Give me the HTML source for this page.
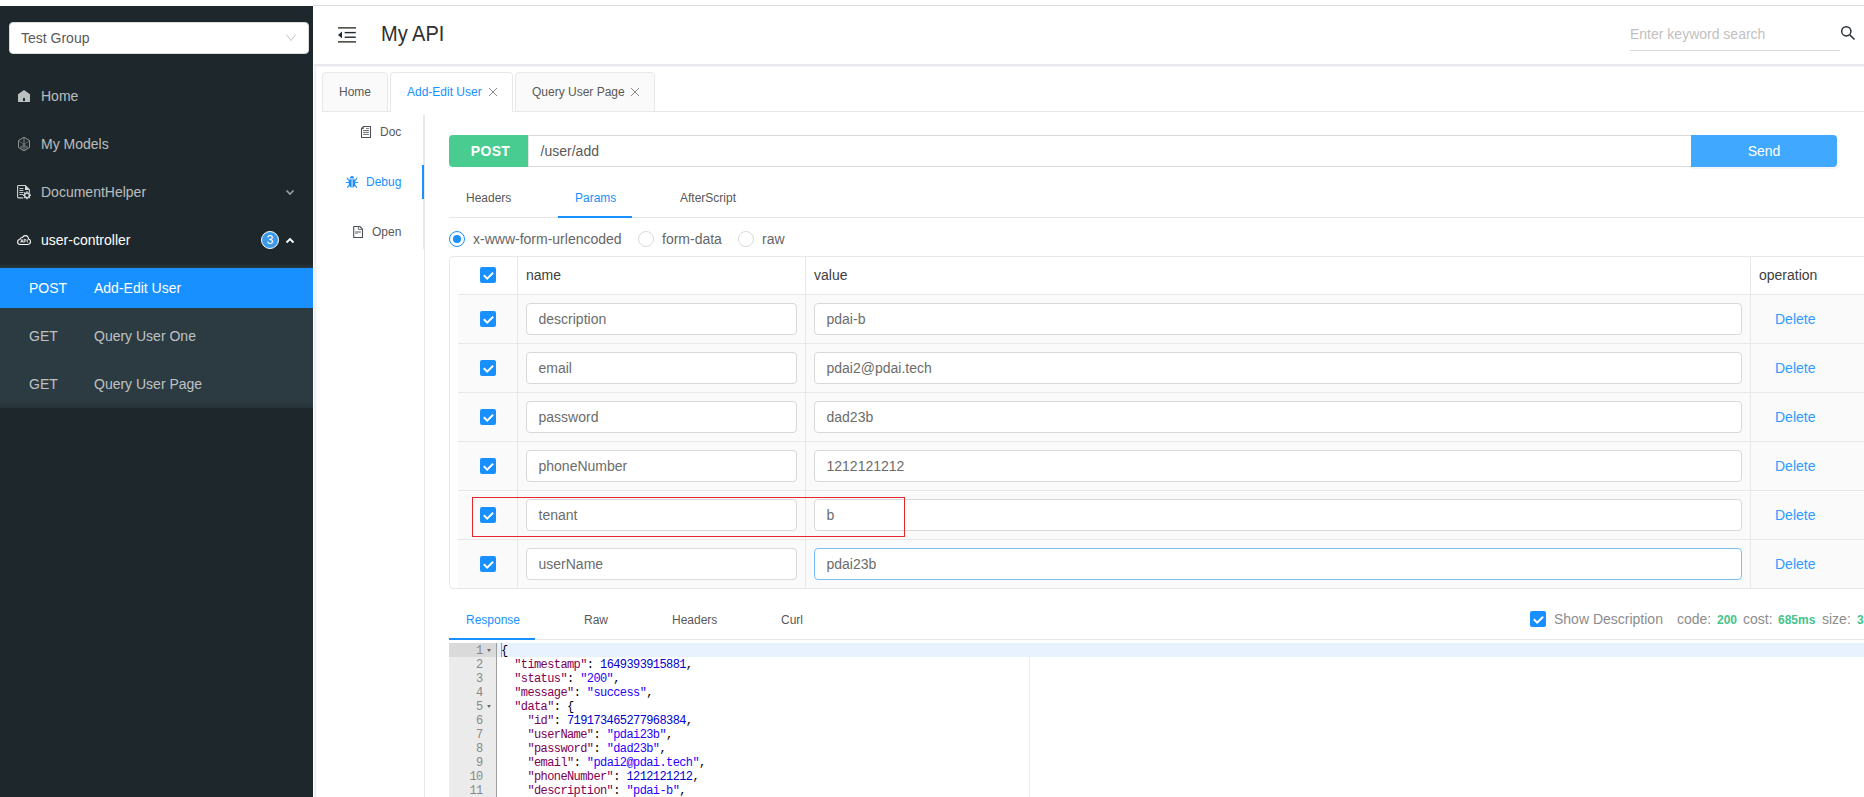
<!DOCTYPE html>
<html>
<head>
<meta charset="utf-8">
<title>My API</title>
<style>
*{box-sizing:border-box;margin:0;padding:0}
html,body{width:1864px;height:797px;overflow:hidden;background:#fff}
body{font-family:"Liberation Sans",sans-serif;font-size:14px;color:#595959;position:relative}
.abs{position:absolute}
/* top strip */
#topline{left:313px;top:5px;width:1551px;height:1px;background:#dcdce4}
/* sidebar */
#side{left:0;top:6px;width:313px;height:791px;background:#1e282c}
#grp{left:9px;top:16px;width:300px;height:32px;background:#fff;border-radius:4px;border:1px solid #d9d9d9}
#grp span{position:absolute;left:11px;top:0;line-height:30px;font-size:14px;color:#595959}
.mi{position:absolute;left:0;width:313px;height:40px;line-height:40px;color:rgba(255,255,255,.7);font-size:14px}
.mi .t{position:absolute;left:41px;top:0}
.mi svg{position:absolute}
#sub{left:0;top:258px;width:313px;height:144px;background:linear-gradient(#1f2a2e,#2c3b41 5px,#2c3b41 138px,#263338)}
.si{position:absolute;left:0;width:313px;height:40px;line-height:40px;color:rgba(255,255,255,.7);font-size:14px}
.si .m{position:absolute;left:29px}
.si .n{position:absolute;left:94px}
.si.sel{background:#1890ff;color:#fff}
/* header */
#hdr{left:313px;top:6px;width:1551px;height:58px;background:#fff}
#title{left:68px;top:0;line-height:56px;font-size:20px;color:#303030;transform:scaleY(1.07);transform-origin:0 35px}
#band{left:314px;top:64px;width:1550px;height:3px;background:linear-gradient(#e8e9ed 0,#e8e9ed 2px,#f4f5f7 2px)}
#bandl{left:314px;top:66px;width:3px;height:731px;background:linear-gradient(90deg,#eff0f4 0,#eff0f4 2px,#f7f8fa 2px)}
/* tabs */
.tab{position:absolute;top:72px;height:40px;border:1px solid #e8e8e8;border-radius:4px 4px 0 0;background:#fafafa;font-size:12px;line-height:38px;color:#595959}
.tab.act{background:#fff;border-bottom-color:#fff;color:#1890ff}
.tab span{position:absolute;top:0;white-space:nowrap}
#tabline{left:322px;top:111px;width:1542px;height:1px;background:#e8e8e8}
.lt{position:absolute;font-size:12px;color:#595959;white-space:nowrap;line-height:14px}
/* url bar */
#post{left:449px;top:135px;width:79px;height:32px;background:#49cc90;border-radius:4px 0 0 4px;color:#fff;font-weight:bold;font-size:14px;line-height:32px;text-align:center;letter-spacing:.3px;padding-left:4px}
#url{left:528px;top:135px;width:1163px;height:32px;border:1px solid #d9d9d9;border-left:1px solid #e4e4e4;border-right:none;line-height:30px;font-size:14px;color:#595959;padding-left:11.6px;background:#fff}
#send{left:1691px;top:135px;width:146px;height:32px;background:#40a9ff;border-radius:0 4px 4px 0;color:#fff;font-size:14px;line-height:32px;text-align:center;box-shadow:0 2px 0 rgba(0,0,0,.035)}
.it{position:absolute;font-size:12px;color:#595959;white-space:nowrap;line-height:14px}
.blue{color:#1890ff}
.hl{position:absolute;height:1px;background:#e8e8e8}
.radio{position:absolute;width:16px;height:16px;border:1px solid #d9d9d9;border-radius:50%;background:#fff}
.radio.on{border-color:#1890ff}
.radio.on:after{content:"";position:absolute;left:3px;top:3px;width:8px;height:8px;border-radius:50%;background:#1890ff}
.rt{position:absolute;font-size:14px;color:#666;white-space:nowrap;line-height:16px}
/* table */
#tbl{left:449px;top:256px;width:1420px;height:333px;border:1px solid #e8e8e8;border-radius:4px 0 0 4px;background:#fff}
.row{position:absolute;left:458px;width:1406px;height:49px;background:#fafafa;border-top:1px solid #e8e8e8}
.vl{position:absolute;width:1px;background:#e8e8e8;top:257px;height:331px}
.cb{position:absolute;width:16px;height:16px;background:#1890ff;border-radius:2px}
.cb:after{content:"";position:absolute;left:0;top:0;width:16px;height:16px;background:#fff;clip-path:polygon(7.2px 13.1px,13.8px 6.5px,12.4px 5.1px,7.2px 10.3px,4.5px 7.6px,3.1px 9px)}
.inp{position:absolute;height:32px;border:1px solid #d9d9d9;border-radius:4px;background:#fff;font-size:14px;color:#6c6c6c;line-height:30px;padding-left:11.5px;white-space:nowrap}
.inp.n{left:526px;width:271px}
.inp.v{left:814px;width:928px}
.th{position:absolute;font-size:14px;color:#404040;line-height:16px}
.del{position:absolute;left:1775px;font-size:14px;color:#2f9bff;line-height:16px}
#red{left:472px;top:497px;width:433px;height:40px;border:1px solid #e5262c}
/* response */
.g{color:#8c8c8c}
.gr{color:#43c58c;font-weight:bold;font-size:12px;margin-top:1px}
/* code */
#gut{left:449px;top:643px;width:48px;height:154px;background:#ebebeb;border-right:1px solid #9f9f9f}
#gact{left:449px;top:643px;width:47px;height:14px;background:#dadada}
#lact{left:497px;top:643px;width:1367px;height:14px;background:#e8f2fe}
#pm{left:1029px;top:657px;width:1px;height:140px;background:#ebebeb}
#cur{left:501px;top:643px;width:1px;height:14px;background:#999}
.ln{position:absolute;left:449px;width:33.6px;text-align:right;font-family:"Liberation Mono",monospace;font-size:12px;letter-spacing:-.6px;line-height:14px;color:#888;margin-top:1px}
.cl{position:absolute;left:501px;font-family:"Liberation Mono",monospace;font-size:12px;letter-spacing:-.6px;line-height:14px;color:#000;white-space:pre;margin-top:1px}
.k{color:#7f0055}.s{color:#2a00ff}.nu{color:#0000cd}
.fold{position:absolute;left:487px;width:0;height:0;border:2.5px solid transparent;border-top:3px solid #666;border-bottom:0}
</style>
</head>
<body>
<div class="abs" id="topline"></div>
<div class="abs" id="side">
 <div class="abs" id="grp"><span>Test Group</span>
  <svg class="abs" style="left:275px;top:11px" width="12" height="10" viewBox="0 0 12 10"><path d="M1.3 .5 L6 6.5 L10.7 .5" fill="none" stroke="#c2c0c8" stroke-width="1"/></svg>
 </div>
 <div class="mi" style="top:70px"><svg style="left:17px;top:13px" width="14" height="14" viewBox="0 0 14 14"><path d="M7 1 L13 5.3 V12.6 Q13 13 12.6 13 H1.4 Q1 13 1 12.6 V5.3 Z" fill="#babfc0"/><path d="M6 12 V9.6 Q6 8.8 7 8.8 Q8 8.8 8 9.6 V12 Z" fill="#1e282c"/></svg><span class="t">Home</span></div>
 <div class="mi" style="top:118px"><svg style="left:17px;top:12px" width="14" height="16" viewBox="0 0 14 16"><g fill="none" stroke="#8f9392" stroke-linejoin="round"><path d="M7 1.2 L12.5 4.5 V11.5 L7 14.8 L1.5 11.5 V4.5 Z" stroke-width="1"/><path d="M7 1.2 V13.5" stroke-width=".9"/><path d="M1.5 4.5 L10.6 11 M12.5 4.5 L3.4 11 M3.4 11 H10.6 M3.4 11 L7 14.8 L10.6 11" stroke-width=".7" opacity=".8"/></g></svg><span class="t">My Models</span></div>
 <div class="mi" style="top:166px"><svg style="left:16px;top:12px" width="16" height="16" viewBox="0 0 16 16"><path d="M7.2 13.9 H2.4 Q1.6 13.9 1.6 13.1 V2.3 Q1.6 1.5 2.4 1.5 H9.3 L13.4 5.8 V8.2" fill="none" stroke="#d0d3d3" stroke-width="1.1"/><path d="M9 1.5 L13.4 6 H9 Z" fill="#d8dada"/><path d="M3.4 4.5 H7.4 M3.4 6.5 H7.4 M3.4 8.5 H7.4 M3.4 10.5 H7" stroke="#c4c7c7" stroke-width="1" fill="none"/><g transform="translate(11 11.3)"><circle r="2.4" fill="none" stroke="#cfd2d2" stroke-width="1.5"/><g stroke="#cfd2d2" stroke-width="1.4"><path d="M0 -4 V-2.6 M0 4 V2.6 M-4 0 H-2.6 M4 0 H2.6 M-2.8 -2.8 L-1.9 -1.9 M2.8 2.8 L1.9 1.9 M-2.8 2.8 L-1.9 1.9 M2.8 -2.8 L1.9 -1.9"/></g></g></svg><span class="t">DocumentHelper</span>
  <svg style="left:285px;top:17px" width="10" height="7" viewBox="0 0 10 7"><path d="M1.5 1.5 L5 5 L8.5 1.5" fill="none" stroke="#9aa0a2" stroke-width="1.6"/></svg></div>
 <div class="mi" style="top:214px;color:#fff"><svg style="left:16px;top:14px" width="16" height="12" viewBox="0 0 16 12"><path d="M4.2 10.4 C2.4 10.4 1.6 9.2 1.6 8 C1.6 6.6 2.6 5.6 3.9 5.5 C4.2 3.9 5.4 3.4 6.4 3.6 C7 2.4 8 1.6 9.3 1.6 C11.2 1.6 12.4 3 12.5 4.9 C13.8 5.2 14.5 6.3 14.5 7.6 C14.5 9.2 13.4 10.4 11.8 10.4 Z" fill="none" stroke="#fff" stroke-width="1.05"/><path d="M4.6 8.7 L5.9 5.3 L7.2 8.7 M5.1 7.6 H6.7 M8.1 8.7 V5.4 H9.2 Q10.1 5.4 10.1 6.3 Q10.1 7.2 9.2 7.2 H8.1 M11.3 5.3 V8.7" fill="none" stroke="#fff" stroke-width=".8"/></svg><span class="t">user-controller</span>
  <div class="abs" style="left:261px;top:11px;width:18px;height:18px;border-radius:9px;background:#3c9ae8;border:1px solid #fff;color:#fff;font-size:12px;line-height:16px;text-align:center">3</div>
  <svg style="left:285px;top:17px" width="10" height="7" viewBox="0 0 10 7"><path d="M1.5 5.5 L5 2 L8.5 5.5" fill="none" stroke="#fff" stroke-width="1.8"/></svg></div>
 <div class="abs" id="sub">
  <div class="si sel" style="top:4px"><span class="m">POST</span><span class="n">Add-Edit User</span></div>
  <div class="si" style="top:52px"><span class="m">GET</span><span class="n">Query User One</span></div>
  <div class="si" style="top:100px"><span class="m">GET</span><span class="n">Query User Page</span></div>
 </div>
</div>
<div class="abs" id="hdr">
 <svg class="abs" style="left:25px;top:21px" width="18" height="16" viewBox="0 0 18 16"><g fill="#595651"><rect x="0" y="0" width="18" height="1.7"/><rect x="0" y="14" width="18" height="1.7"/></g><g fill="#1e2a33"><rect x="6.7" y="4.9" width="11.1" height="1.4"/><rect x="6.7" y="9.5" width="11.1" height="1.4"/><path d="M0 7.9 L4 4.6 V11.2 Z"/></g></svg>
 <div class="abs" id="title">My API</div>
 <div class="abs" style="left:1317px;top:18px;font-size:14px;color:#bfbfbf;line-height:20px">Enter keyword search</div>
 <div class="abs" style="left:1317px;top:44px;width:210px;height:1px;background:#d9d9d9"></div>
 <svg class="abs" style="left:1527px;top:19px" width="16" height="16" viewBox="0 0 16 16"><circle cx="6.3" cy="6.3" r="4.6" fill="none" stroke="#283238" stroke-width="1.5"/><path d="M9.7 9.7 L14.5 14.5" stroke="#283238" stroke-width="1.6"/></svg>
</div>
<div class="abs" id="band"></div>
<div class="abs" id="bandl"></div>
<div class="tab" style="left:322px;width:66px"><span style="left:16px">Home</span></div>
<div class="abs" id="tabline"></div>
<div class="tab act" style="left:390px;width:123px"><span style="left:16px">Add-Edit User</span>
 <svg class="abs" style="left:97px;top:14px" width="10" height="10" viewBox="0 0 10 10"><path d="M1 1 L9 9 M9 1 L1 9" stroke="#8c8c8c" stroke-width="1"/></svg></div>
<div class="tab" style="left:515px;width:140px"><span style="left:16px">Query User Page</span>
 <svg class="abs" style="left:114px;top:14px" width="10" height="10" viewBox="0 0 10 10"><path d="M1 1 L9 9 M9 1 L1 9" stroke="#8c8c8c" stroke-width="1"/></svg></div>
<!-- left vertical tabs -->
<div class="abs" style="left:423px;top:115px;width:1px;height:134px;background:#e8e8e8"></div>
<div class="abs" style="left:424px;top:115px;width:1px;height:682px;background:#e8e8e8"></div>
<div class="abs" style="left:422px;top:165px;width:2px;height:34px;background:#1890ff"></div>
<svg class="abs" style="left:360px;top:125px" width="12" height="14" viewBox="0 0 12 14"><path d="M3.4 1.5 H10.5 V12.5 H1.5 V3.6 Z" fill="none" stroke="#4d5157" stroke-width="1.1" stroke-linejoin="round"/><path d="M3.7 1.2 V3.9 H1.2 Z" fill="#4d5157"/><path d="M6.1 3.6 H8.9 M3.1 5.5 H8.9 M3.1 7.4 H8.9 M3.1 9.4 H8.9" stroke="#5c5c5c" stroke-width=".9" fill="none"/></svg>
<div class="lt" style="left:380px;top:125px">Doc</div>
<svg class="abs" style="left:345px;top:175px" width="14" height="14" viewBox="0 0 14 14"><path d="M4.2 4.6 Q4.4 3.1 5.2 3.1 H8.8 Q9.6 3.1 9.8 4.6 Z" fill="#a6cdf7"/><path d="M5 3 A2 2 0 0 1 9 3 Z" fill="#1890ff"/><path d="M3.8 5.6 Q3.8 4.5 5 4.5 H9 Q10.3 4.5 10.3 5.6 V9 Q10.3 12.2 7 12.6 Q3.8 12.2 3.8 9 Z" fill="#1890ff"/><rect x="6.3" y="4.5" width="1.6" height="8.3" fill="#a6cdf7"/><path d="M3.9 5.3 L2.2 3.2 M10.2 5.3 L11.9 3.2 M3.7 7.5 H1.3 M10.4 7.5 H12.8 M4.1 10.4 L2.4 12.3 M10 10.4 L11.7 12.3" stroke="#2b93ff" stroke-width="1.1" stroke-linecap="round" fill="none"/></svg>
<div class="lt blue" style="left:366px;top:175px">Debug</div>
<svg class="abs" style="left:352px;top:225px" width="12" height="14" viewBox="0 0 12 14"><path d="M1.7 1.5 H7.8 L10.5 4.2 V12.5 H1.7 Z" fill="none" stroke="#4d5157" stroke-width="1.1" stroke-linejoin="round"/><path d="M6.4 1.6 V4.4 H10.4" fill="none" stroke="#6a6e73" stroke-width="1"/><rect x="3.1" y="6.1" width="5.8" height="1.9" fill="#a3a7a9"/><rect x="3.1" y="8" width="2.6" height="1" fill="#a3a7a9"/></svg>
<div class="lt" style="left:372px;top:225px">Open</div>
<div class="abs" id="post">POST</div>
<div class="abs" id="url">/user/add</div>
<div class="abs" id="send">Send</div>
<div class="it" style="left:466px;top:191px">Headers</div>
<div class="it blue" style="left:575px;top:191px">Params</div>
<div class="it" style="left:680px;top:191px">AfterScript</div>
<div class="hl" style="left:449px;top:217px;width:1415px"></div>
<div class="abs" style="left:558px;top:216px;width:74px;height:2px;background:#1890ff"></div>
<div class="radio on" style="left:449px;top:231px"></div><div class="rt" style="left:473px;top:231px">x-www-form-urlencoded</div>
<div class="radio" style="left:638px;top:231px"></div><div class="rt" style="left:662px;top:231px">form-data</div>
<div class="radio" style="left:738px;top:231px"></div><div class="rt" style="left:762px;top:231px">raw</div>
<div class="abs" id="tbl"></div>
<div class="row" style="top:294px"></div>
<div class="row" style="top:343px"></div>
<div class="row" style="top:392px"></div>
<div class="row" style="top:441px"></div>
<div class="row" style="top:490px"></div>
<div class="row" style="top:539px"></div>
<div class="vl" style="left:517px"></div>
<div class="vl" style="left:805px"></div>
<div class="vl" style="left:1750px"></div>
<div class="cb" style="left:480px;top:267px"></div><div class="th" style="left:526px;top:267px">name</div><div class="th" style="left:814px;top:267px">value</div><div class="th" style="left:1759px;top:267px">operation</div>
<div class="cb" style="left:480px;top:311px"></div><div class="inp n" style="top:303px">description</div><div class="inp v" style="top:303px">pdai-b</div><div class="del" style="top:311px">Delete</div>
<div class="cb" style="left:480px;top:360px"></div><div class="inp n" style="top:352px">email</div><div class="inp v" style="top:352px">pdai2@pdai.tech</div><div class="del" style="top:360px">Delete</div>
<div class="cb" style="left:480px;top:409px"></div><div class="inp n" style="top:401px">password</div><div class="inp v" style="top:401px">dad23b</div><div class="del" style="top:409px">Delete</div>
<div class="cb" style="left:480px;top:458px"></div><div class="inp n" style="top:450px">phoneNumber</div><div class="inp v" style="top:450px">1212121212</div><div class="del" style="top:458px">Delete</div>
<div class="cb" style="left:480px;top:507px"></div><div class="inp n" style="top:499px">tenant</div><div class="inp v" style="top:499px">b</div><div class="del" style="top:507px">Delete</div>
<div class="cb" style="left:480px;top:556px"></div><div class="inp n" style="top:548px">userName</div><div class="inp v" style="top:548px;border-color:#79bef9">pdai23b</div><div class="del" style="top:556px">Delete</div>
<div class="abs" id="red"></div>
<div class="it blue" style="left:466px;top:613px">Response</div>
<div class="it" style="left:584px;top:613px">Raw</div>
<div class="it" style="left:672px;top:613px">Headers</div>
<div class="it" style="left:781px;top:613px">Curl</div>
<div class="hl" style="left:449px;top:639px;width:1415px"></div>
<div class="abs" style="left:449px;top:638px;width:86px;height:2px;background:#1890ff"></div>
<div class="cb" style="left:1530px;top:611px"></div>
<div class="rt g" style="left:1554px;top:611px;color:#8c8c8c">Show Description</div>
<div class="rt" style="left:1677px;top:611px;color:#8c8c8c">code:</div><div class="rt gr" style="left:1717px;top:611px">200</div>
<div class="rt" style="left:1743px;top:611px;color:#8c8c8c">cost:</div><div class="rt gr" style="left:1778px;top:611px">685ms</div>
<div class="rt" style="left:1822px;top:611px;color:#8c8c8c">size:</div><div class="rt gr" style="left:1857px;top:611px">3</div>
<div class="abs" id="gut"></div><div class="abs" id="gact"></div><div class="abs" id="lact"></div><div class="abs" id="pm"></div><div class="abs" id="cur"></div>
<div class="ln" style="top:643px">1</div><div class="cl" style="top:643px">{</div>
<div class="ln" style="top:657px">2</div><div class="cl" style="top:657px">  <span class="k">"timestamp"</span>: <span class="nu">1649393915881</span>,</div>
<div class="ln" style="top:671px">3</div><div class="cl" style="top:671px">  <span class="k">"status"</span>: <span class="s">"200"</span>,</div>
<div class="ln" style="top:685px">4</div><div class="cl" style="top:685px">  <span class="k">"message"</span>: <span class="s">"success"</span>,</div>
<div class="ln" style="top:699px">5</div><div class="cl" style="top:699px">  <span class="k">"data"</span>: {</div>
<div class="ln" style="top:713px">6</div><div class="cl" style="top:713px">    <span class="k">"id"</span>: <span class="nu">719173465277968384</span>,</div>
<div class="ln" style="top:727px">7</div><div class="cl" style="top:727px">    <span class="k">"userName"</span>: <span class="s">"pdai23b"</span>,</div>
<div class="ln" style="top:741px">8</div><div class="cl" style="top:741px">    <span class="k">"password"</span>: <span class="s">"dad23b"</span>,</div>
<div class="ln" style="top:755px">9</div><div class="cl" style="top:755px">    <span class="k">"email"</span>: <span class="s">"pdai2@pdai.tech"</span>,</div>
<div class="ln" style="top:769px">10</div><div class="cl" style="top:769px">    <span class="k">"phoneNumber"</span>: <span class="nu">1212121212</span>,</div>
<div class="ln" style="top:783px">11</div><div class="cl" style="top:783px">    <span class="k">"description"</span>: <span class="s">"pdai-b"</span>,</div>
<div class="fold" style="top:649px"></div><div class="fold" style="top:705px"></div>
</body>
</html>
